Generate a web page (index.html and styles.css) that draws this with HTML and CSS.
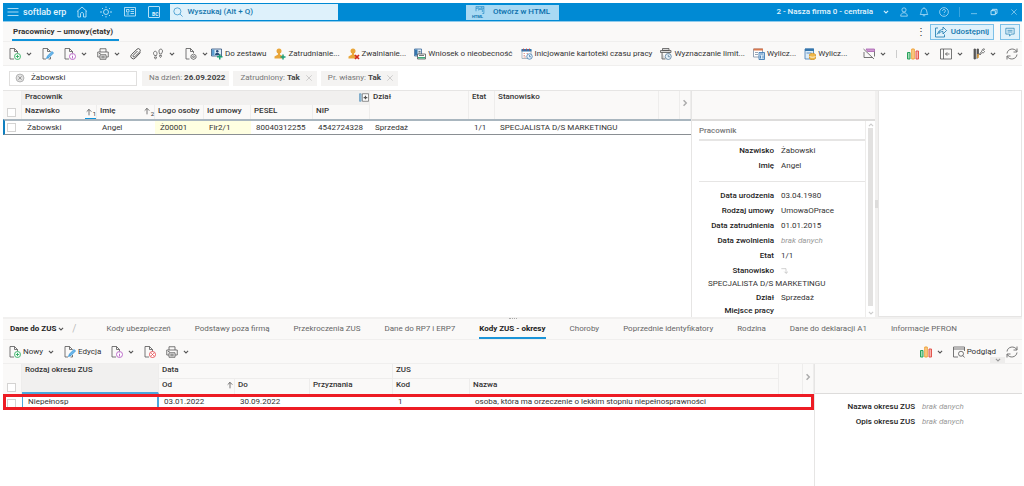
FILE: index.html
```html
<!DOCTYPE html>
<html lang="pl">
<head>
    <meta charset="UTF-8">
    <meta name="viewport" content="width=device-width, initial-scale=1.0">
    <title>softlab erp - Pracownicy – umowy(etaty)</title>
    <link rel="stylesheet" href="styles.css">
</head>
<body>
    <!-- Icon sprite -->
    <svg class="sprite" aria-hidden="true">
        <symbol id="i-chev" viewBox="0 0 10 10"><path d="M1.500 3.200 5 6.600l3.500-3.400" stroke-width="1.800"/></symbol>
        <symbol id="i-page" viewBox="0 0 24 24"><path d="M10 22H2V1h9l6 6v4M11 1v6h6"/></symbol>
        <symbol id="i-new" viewBox="0 0 24 24"><use href="#i-page"/><g stroke="#2fae60" stroke-width="1.800"><circle cx="17" cy="17" r="6" fill="#fff"/><path d="M17 13.500v7M13.500 17h7"/></g></symbol>
        <symbol id="i-info" viewBox="0 0 24 24"><use href="#i-page"/><g stroke="#b65fc4" stroke-width="1.800"><circle cx="17" cy="17" r="6" fill="#fff"/><path d="M17 16v5M17 13v1.500"/></g></symbol>
        <symbol id="i-del" viewBox="0 0 24 24"><use href="#i-page"/><g stroke="#e5484d" stroke-width="1.800"><circle cx="17" cy="17" r="6" fill="#fff"/><path d="m14.500 14.500 5 5m0-5-5 5"/></g></symbol>
        <symbol id="i-gear" viewBox="0 0 24 24"><path d="M9 22H2V1h9l6 6v3M11 1v6h6"/><path d="m17 12 5 3v5l-5 3-5-3v-5z"/><circle cx="17" cy="17.500" r="1.800"/></symbol>
        <symbol id="i-edit" viewBox="0 0 24 24"><path d="M8 22H2V1h9l6 6M11 1v6h6M17 18v4h-4"/><path d="m9 21 2-5L20 7l3 3-9 9z" fill="#6db8ea" stroke="#2b8fd6" stroke-width="1.500"/></symbol>
        <symbol id="i-print" viewBox="0 0 24 24"><path d="M6 8V1.500h12V8M6 18H1.500V8h21v10H18M6 13.500h12v9H6zM8.500 16.500h7M8.500 19.500h7M4 11h3"/></symbol>
        <symbol id="i-clip" viewBox="0 0 24 24"><path d="M21 9 10.500 20a5 5 0 0 1-7.500-7L14 2.500a3.500 3.500 0 0 1 5.500 5L9.500 17.500a1.800 1.800 0 0 1-3-3L15 6" stroke-width="2"/></symbol>
        <symbol id="i-feet" viewBox="0 0 24 24"><path d="M3 11c0-6 7-6 7 0 0 2-1 3-1 4H5c0-1-2-2-2-4zM5 18h4c0 5-4 5-4 0zM14 6c0-5 7-5 7 0 0 3-2 4-2 6h-4c0-2-1-3-1-6zM15 15h4c0 5-4 5-4 0z"/></symbol>
        <symbol id="i-set" viewBox="0 0 24 24"><path d="M1 2h20v14H1z" fill="#dcecf8" stroke="#2d4f78"/><path d="M2 3h5v12H2z" fill="#5c9fd2" stroke="none"/><circle cx="12.500" cy="6.500" r="2.500" fill="#274b78" stroke="none"/><path d="M8 14c0-6 9-6 9 0z" fill="#274b78" stroke="none"/><path d="M17.500 12v11M12 17.500h11" stroke="#1e9e75" stroke-width="3"/></symbol>
        <symbol id="i-user" viewBox="0 0 24 24"><circle cx="10" cy="6" r="5" fill="#e9a63a" stroke="none"/><path d="M8 10h4v3l5 3v5H1v-4l7-4z" fill="#e9a63a" stroke="none"/></symbol>
        <symbol id="i-hire" viewBox="0 0 24 24"><use href="#i-user"/><path d="M18 13v10M13 18h10" stroke="#1e9e75" stroke-width="3"/></symbol>
        <symbol id="i-fire" viewBox="0 0 24 24"><use href="#i-user"/><path d="m14 14 8 8m0-8-8 8" stroke="#d02b1f" stroke-width="3.500"/></symbol>
        <symbol id="i-absence" viewBox="0 0 24 24"><path d="M1 2h14v14H1z" fill="#dcecf8" stroke="#3c6a9a"/><path d="M2 3h5v12H2z" fill="#3576ad" stroke="none"/><path d="M9 7h4M9 10h4"/><path d="M7 12h16v10H7z" fill="#fff"/><path d="M8 18h14v3H8z" fill="#3fae7b" stroke="none"/><path d="M10 15h10"/></symbol>
        <symbol id="i-time" viewBox="0 0 24 24"><path d="M2 4h18v17H2z" fill="#fff" stroke="#9aa7b3"/><path d="M1 2h20v5H1z" fill="#3576ad" stroke="none"/><path d="M5 1v4M11 1v4M17 1v4" stroke="#d0453a"/><path d="M5 11h3M11 11h3M5 15h3M5 18h5" stroke="#d98a80"/><circle cx="17" cy="17" r="5.500" fill="#e6f2fb" stroke="#4a7fae"/><path d="M17 14v3.500h3" stroke="#4a7fae"/></symbol>
        <symbol id="i-limit" viewBox="0 0 24 24"><path d="M5 1h13v4H5zM1 5h21v4H1zM4 9v13h7M18 9v2" fill="#d8d8d8"/><circle cx="16.500" cy="17" r="6" fill="#e6f2fb" stroke="#557a99"/><path d="M16.500 13.500v4h3.500" stroke="#557a99"/></symbol>
        <symbol id="i-calc" viewBox="0 0 24 24"><path d="M1 2h18v16H1z" fill="#fff" stroke="#7b8da3"/><path d="M1 1h19v4H1z" fill="#d9784e" stroke="none"/><path d="M4 9h6M4 13h6" stroke="#7b8da3"/><path d="M12 9h11v14H12z" fill="#dcecf8" stroke="#2c6fae"/><path d="M14 12h7M15 15v6M20 15v6" stroke="#2c6fae"/></symbol>
        <symbol id="i-coins" viewBox="0 0 24 24"><path d="M2 2h17v20H2z" fill="#dcecf8" stroke="#4378ad"/><path d="M2 1h18v5H2z" fill="#3576ad" stroke="none"/><path d="M5 10h10" stroke="#4378ad"/><path d="M11 13c2-3 10-3 12 0v8c-2 3-10 3-12 0z" fill="#f0b849" stroke="#d6942a"/><path d="M11 17c3 2 9 2 12 0" stroke="#fff"/></symbol>
        <symbol id="i-rule" viewBox="0 0 24 24"><path d="M2 8v11h17"/><path d="M6 2h17v5H9z" fill="#cf9ad2" stroke="#a75fb0"/><path d="m1 2 21 20M23 7v10"/></symbol>
        <symbol id="i-chart" viewBox="0 0 24 24"><path d="M1 9h5v13H1z" fill="#a5dcb8" stroke="#27a35c" stroke-width="2"/><path d="M9.500 2h5v20h-5z" fill="#fbd194" stroke="#f0a036" stroke-width="2"/><path d="M18 6h5v16h-5z" fill="#f8b3ae" stroke="#e2554d" stroke-width="2"/></symbol>
        <symbol id="i-pane" viewBox="0 0 24 24"><path d="M1 2h22v20H1zM7 2v20M19 12h-8m3.500-3.500L11 12l3.500 3.500"/></symbol>
        <symbol id="i-tools" viewBox="0 0 24 24"><path d="M2 2h3v20H2zM8 2h3v11l-3 8z" fill="#555"/><path d="m13 12 5-6c0-4 3-5 5-4l-2 3 2 2c-1 3-3 3-5 2l-4 5z" fill="#fff"/><path d="M10 12v8" stroke="#e6a23a" stroke-width="3"/></symbol>
        <symbol id="i-refresh" viewBox="0 0 24 24"><path d="M2 11C3 1 17-1 21.500 7M22 1v7h-7M22 13c-1 10-15 12-19.500 4M2 23v-7h7"/></symbol>
        <symbol id="i-preview" viewBox="0 0 24 24"><path d="M10 22H1V2h22v8M1 6h22"/><circle cx="16" cy="15.500" r="5"/><path d="m19.500 19 3.500 4"/></symbol>
        <symbol id="i-menu" viewBox="0 0 24 24"><path d="M1 5h22M1 12h22M1 19h22"/></symbol>
        <symbol id="i-home" viewBox="0 0 24 24"><path d="M2 11 12 2l10 9M4 10v12h5v-6c0-4 6-4 6 0v6h5V10"/></symbol>
        <symbol id="i-sun" viewBox="0 0 24 24"><circle cx="12" cy="12" r="5"/><path d="M12 1v3M12 20v3M0 12h4M20 12h4M4 4l2 2M18 18l2 2M20 4l-2 2M4 20l2-2"/></symbol>
        <symbol id="i-card" viewBox="0 0 24 24"><path d="M1 3h22v17H1zM5 7h5v5H5zM5 16h5M13 7h7M13 11h7M13 15h7"/></symbol>
        <symbol id="i-search" viewBox="0 0 24 24"><circle cx="10.500" cy="10.500" r="8.500"/><path d="m17 17 6 6"/></symbol>
        <symbol id="i-html" viewBox="0 0 28 24"><path d="M6 14V1h21v19h-4M6 6h21M10 3.500h3M13 12V9h10v7M19 3.500h4"/></symbol>
        <symbol id="i-person" viewBox="0 0 24 24"><circle cx="12" cy="7" r="5"/><path d="M4 22c0-11 16-11 16 0z"/></symbol>
        <symbol id="i-bell" viewBox="0 0 24 24"><path d="M3 18c3-3 1-15 9-15s6 12 9 15zM9 21h6M12 1v2"/></symbol>
        <symbol id="i-help" viewBox="0 0 24 24"><circle cx="12" cy="12" r="10.500"/><path d="M8.500 9.500c0-5 7-4.500 7 0 0 2.500-3.500 2.500-3.500 5M12 17v1.500"/></symbol>
        <symbol id="i-min" viewBox="0 0 24 24"><path d="M3 17h18"/></symbol>
        <symbol id="i-restore" viewBox="0 0 24 24"><path d="M3 8h13v12H3zM7 8V4h14v12h-5" stroke-width="2.500"/></symbol>
        <symbol id="i-close" viewBox="0 0 24 24"><path d="m4 4 16 16M20 4 4 20"/></symbol>
        <symbol id="i-share" viewBox="0 0 24 24"><path d="M6 4H1v18h18v-5M4 17 9 9"/><path d="M8 15c0-6 3-8 8-8V2l7 7-7 7v-5c-4 0-6 1-8 4z"/></symbol>
        <symbol id="i-chat" viewBox="0 0 24 24"><path d="M2 3h20v14h-7l-4 5v-5H2zM6 8h12M6 12h12"/></symbol>
        <symbol id="i-up" viewBox="0 0 12 12"><path d="M6 11V2M2.500 5.500 6 2l3.500 3.500"/></symbol>
        <symbol id="i-clear" viewBox="0 0 24 24"><circle cx="12" cy="12" r="9.500" fill="#e2e2e2" stroke="#999"/><path d="m8 8 8 8m0-8-8 8" stroke="#777"/></symbol>
        <symbol id="i-fold" viewBox="0 0 24 20"><path d="M1 1h4v18H1z" fill="#9cc6e3" stroke="#5b93b8"/><path d="M8 1h15v18H8z" fill="#fff"/><path d="M11 10h9M15.500 6v8" stroke-width="3"/></symbol>
        <symbol id="i-jump" viewBox="0 0 24 24"><path d="M1 5h14v14M10 14l5 5 6-5"/></symbol>
    </svg>

    <div class="app">
        <header class="topbar">
            <div class="topbar-left">
                <button class="icon-btn" aria-label="Menu"><svg class="icon"><use href="#i-menu"/></svg></button>
                <span class="brand">softlab erp</span>
                <nav class="shortcuts">
                    <button class="icon-btn" aria-label="Start"><svg class="icon"><use href="#i-home"/></svg></button>
                    <button class="icon-btn" aria-label="Motyw"><svg class="icon"><use href="#i-sun"/></svg></button>
                    <button class="icon-btn" aria-label="Karta"><svg class="icon"><use href="#i-card"/></svg></button>
                    <button class="bc">BC</button>
                </nav>
                <label class="search">
                    <svg class="icon"><use href="#i-search"/></svg>
                    <input type="text" placeholder="Wyszukaj (Alt + Q)" aria-label="Wyszukaj">
                </label>
            </div>
            <button class="open-html">
                <span class="html-icon"><svg class="icon"><use href="#i-html"/></svg><small>HTML</small></span>
                Otwórz w HTML
            </button>
            <div class="topbar-right">
                <button class="icon-btn company">2 - Nasza firma 0 - centrala <svg class="chev"><use href="#i-chev"/></svg></button>
                <div class="account">
                    <button class="icon-btn" aria-label="Konto"><svg class="icon small"><use href="#i-person"/></svg></button>
                    <button class="icon-btn" aria-label="Powiadomienia"><svg class="icon small"><use href="#i-bell"/></svg></button>
                    <button class="icon-btn" aria-label="Pomoc"><svg class="icon small"><use href="#i-help"/></svg></button>
                </div>
                <div class="window-buttons">
                    <button class="icon-btn" aria-label="Minimalizuj"><svg class="icon tiny"><use href="#i-min"/></svg></button>
                    <button class="icon-btn" aria-label="Przywróć"><svg class="icon tiny"><use href="#i-restore"/></svg></button>
                    <button class="icon-btn" aria-label="Zamknij"><svg class="icon tiny"><use href="#i-close"/></svg></button>
                </div>
            </div>
        </header>

        <div class="page-tabs">
            <a href="#" class="page-tab">Pracownicy – umowy(etaty)</a>
            <div class="page-actions">
                <button class="icon-btn" aria-label="Więcej">⋮</button>
                <button class="share"><svg class="icon"><use href="#i-share"/></svg>Udostępnij</button>
                <button class="share chat" aria-label="Komentarze"><svg class="icon small"><use href="#i-chat"/></svg></button>
            </div>
        </div>

        <div class="toolbar">
            <div class="tools">
                <button class="tool" aria-label="Nowy"><svg class="icon"><use href="#i-new"/></svg><svg class="chev"><use href="#i-chev"/></svg></button>
                <button class="tool" aria-label="Edycja"><svg class="icon"><use href="#i-edit"/></svg></button>
                <button class="tool" aria-label="Informacje"><svg class="icon"><use href="#i-info"/></svg><svg class="chev"><use href="#i-chev"/></svg></button>
                <button class="tool" aria-label="Drukuj"><svg class="icon"><use href="#i-print"/></svg><svg class="chev"><use href="#i-chev"/></svg></button>
                <button class="tool" aria-label="Załączniki"><svg class="icon"><use href="#i-clip"/></svg></button>
                <button class="tool" aria-label="Ślad"><svg class="icon"><use href="#i-feet"/></svg><svg class="chev"><use href="#i-chev"/></svg></button>
                <button class="tool" aria-label="Operacje"><svg class="icon"><use href="#i-gear"/></svg><svg class="chev"><use href="#i-chev"/></svg></button>
            </div>
            <div class="tools named">
                <button class="tool"><svg class="icon"><use href="#i-set"/></svg>Do zestawu</button>
                <button class="tool"><svg class="icon"><use href="#i-hire"/></svg>Zatrudnianie...</button>
                <button class="tool"><svg class="icon"><use href="#i-fire"/></svg>Zwalnianie...</button>
                <button class="tool"><svg class="icon"><use href="#i-absence"/></svg>Wniosek o nieobecność</button>
                <button class="tool"><svg class="icon"><use href="#i-time"/></svg>Inicjowanie kartoteki czasu pracy</button>
                <button class="tool"><svg class="icon"><use href="#i-limit"/></svg>Wyznaczanie limit...</button>
                <button class="tool"><svg class="icon"><use href="#i-calc"/></svg>Wylicz...</button>
                <button class="tool"><svg class="icon"><use href="#i-coins"/></svg>Wylicz...</button>
            </div>
            <div class="tools right">
                <button class="tool" aria-label="Reguły"><svg class="icon"><use href="#i-rule"/></svg><svg class="chev"><use href="#i-chev"/></svg></button>
                <span class="divider"></span>
                <button class="tool" aria-label="Wykres"><svg class="icon"><use href="#i-chart"/></svg><svg class="chev"><use href="#i-chev"/></svg></button>
                <button class="tool" aria-label="Panel"><svg class="icon"><use href="#i-pane"/></svg><svg class="chev"><use href="#i-chev"/></svg></button>
                <button class="tool" aria-label="Narzędzia"><svg class="icon"><use href="#i-tools"/></svg><svg class="chev"><use href="#i-chev"/></svg></button>
                <button class="tool" aria-label="Odśwież"><svg class="icon"><use href="#i-refresh"/></svg></button>
            </div>
        </div>

        <div class="filters">
            <label class="filter-input">
                <svg class="icon small"><use href="#i-clear"/></svg>
                <input type="text" value="Żabowski" aria-label="Filtr">
            </label>
            <button class="chip">Na dzień: <b>26.09.2022</b></button>
            <button class="chip">Zatrudniony: <b>Tak</b><svg class="icon tiny"><use href="#i-close"/></svg></button>
            <button class="chip">Pr. własny: <b>Tak</b><svg class="icon tiny"><use href="#i-close"/></svg></button>
        </div>

        <main class="upper">
            <section class="grid-pane">
                <table class="grid employees">
                    <colgroup>
                        <col class="w-check"><col class="w-surname"><col class="w-name"><col class="w-logo"><col class="w-id"><col class="w-pesel"><col class="w-nip"><col class="w-dept"><col class="w-etat"><col class="w-job"><col><col class="w-more">
                    </colgroup>
                    <thead>
                        <tr>
                            <th rowspan="2" class="check"><input type="checkbox" aria-label="Zaznacz wszystkie"></th>
                            <th colspan="6" class="group"><div class="th">Pracownik<svg class="icon fold"><use href="#i-fold"/></svg></div></th>
                            <th rowspan="2">Dział</th>
                            <th rowspan="2">Etat</th>
                            <th rowspan="2">Stanowisko</th>
                            <th rowspan="2"></th>
                            <th rowspan="2" class="more"><svg class="chev"><use href="#i-chev"/></svg></th>
                        </tr>
                        <tr>
                            <th><div class="th">Nazwisko<span class="sort active"><svg class="icon arrow"><use href="#i-up"/></svg><sub>1</sub></span></div></th>
                            <th><div class="th">Imię<span class="sort"><svg class="icon arrow"><use href="#i-up"/></svg><sub>2</sub></span></div></th>
                            <th>Logo osoby</th>
                            <th>Id umowy</th>
                            <th>PESEL</th>
                            <th>NIP</th>
                        </tr>
                    </thead>
                    <tbody>
                        <tr>
                            <td class="check"><input type="checkbox" aria-label="Zaznacz wiersz"></td>
                            <td>Żabowski</td>
                            <td>Angel</td>
                            <td class="key">Ż00001</td>
                            <td class="key">Fir2/1</td>
                            <td>80040312255</td>
                            <td>4542724328</td>
                            <td>Sprzedaż</td>
                            <td>1/1</td>
                            <td>SPECJALISTA D/S MARKETINGU</td>
                            <td></td>
                            <td></td>
                        </tr>
                    </tbody>
                </table>
            </section>

            <aside class="details">
                <div class="details-head"></div>
                <div class="details-body">
                    <div class="details-content">
                        <h2>Pracownik</h2>
                        <dl>
                            <dt>Nazwisko</dt><dd>Żabowski</dd>
                            <dt>Imię</dt><dd>Angel</dd>
                        </dl>
                        <dl class="second">
                            <dt>Data urodzenia</dt><dd>03.04.1980</dd>
                            <dt>Rodzaj umowy</dt><dd>UmowaOPrace</dd>
                            <dt>Data zatrudnienia</dt><dd>01.01.2015</dd>
                            <dt>Data zwolnienia</dt><dd class="empty">brak danych</dd>
                            <dt>Etat</dt><dd>1/1</dd>
                            <dt>Stanowisko</dt><dd><svg class="icon jump"><use href="#i-jump"/></svg></dd>
                            <dd class="wide">SPECJALISTA D/S MARKETINGU</dd>
                            <dt>Dział</dt><dd>Sprzedaż</dd>
                            <dt class="last">Miejsce pracy</dt><dd class="last"></dd>
                        </dl>
                    </div>
                    <div class="scrollbar">
                        <svg class="chev up"><use href="#i-chev"/></svg>
                        <div class="thumb"></div>
                        <svg class="chev"><use href="#i-chev"/></svg>
                    </div>
                </div>
            </aside>
            <div class="splitter"><span></span></div>
            <aside class="blank-pane"></aside>
        </main>

        <div class="h-splitter"><span></span></div>

        <nav class="sub-tabs">
            <button class="icon-btn sub-title">Dane do ZUS<svg class="chev"><use href="#i-chev"/></svg><span class="slash">/</span></button>
            <a href="#">Kody ubezpieczeń</a>
            <a href="#">Podstawy poza firmą</a>
            <a href="#">Przekroczenia ZUS</a>
            <a href="#">Dane do RP7 i ERP7</a>
            <a href="#" class="active">Kody ZUS - okresy</a>
            <a href="#">Choroby</a>
            <a href="#">Poprzednie identyfikatory</a>
            <a href="#">Rodzina</a>
            <a href="#">Dane do deklaracji A1</a>
            <a href="#">Informacje PFRON</a>
        </nav>

        <div class="toolbar sub-toolbar">
            <div class="tools">
                <button class="tool"><svg class="icon"><use href="#i-new"/></svg>Nowy<svg class="chev"><use href="#i-chev"/></svg></button>
                <button class="tool"><svg class="icon"><use href="#i-edit"/></svg>Edycja</button>
                <button class="tool" aria-label="Informacje"><svg class="icon"><use href="#i-info"/></svg><svg class="chev"><use href="#i-chev"/></svg></button>
                <button class="tool" aria-label="Usuń"><svg class="icon"><use href="#i-del"/></svg></button>
                <button class="tool" aria-label="Drukuj"><svg class="icon"><use href="#i-print"/></svg><svg class="chev"><use href="#i-chev"/></svg></button>
            </div>
            <div class="tools right">
                <button class="tool" aria-label="Wykres"><svg class="icon"><use href="#i-chart"/></svg><svg class="chev"><use href="#i-chev"/></svg></button>
                <button class="tool"><svg class="icon"><use href="#i-preview"/></svg>Podgląd</button>
                <button class="tool" aria-label="Odśwież"><svg class="icon"><use href="#i-refresh"/></svg></button>
            </div>
            <button class="collapse" aria-label="Zwiń"><svg class="chev"><use href="#i-chev"/></svg></button>
        </div>

        <div class="lower">
            <section class="grid-pane">
                <table class="grid periods">
                    <colgroup>
                        <col class="w-check"><col class="w-kind"><col class="w-from"><col class="w-to"><col class="w-grant"><col class="w-code"><col><col class="w-fill"><col class="w-more">
                    </colgroup>
                    <thead>
                        <tr>
                            <th rowspan="2" class="check"><input type="checkbox" aria-label="Zaznacz wszystkie"></th>
                            <th rowspan="2" class="sorted">Rodzaj okresu ZUS</th>
                            <th colspan="3" class="line">Data</th>
                            <th colspan="2" class="line">ZUS</th>
                            <th rowspan="2"></th>
                            <th rowspan="2" class="more"><svg class="chev"><use href="#i-chev"/></svg></th>
                        </tr>
                        <tr>
                            <th><div class="th">Od<span class="sort"><svg class="icon arrow"><use href="#i-up"/></svg></span></div></th>
                            <th>Do</th>
                            <th>Przyznania</th>
                            <th>Kod</th>
                            <th>Nazwa</th>
                        </tr>
                    </thead>
                    <tbody>
                        <tr>
                            <td class="check"><input type="checkbox" aria-label="Zaznacz wiersz"></td>
                            <td class="current">Niepełnosp</td>
                            <td>03.01.2022</td>
                            <td>30.09.2022</td>
                            <td></td>
                            <td>1</td>
                            <td>osoba, która ma orzeczenie o lekkim stopniu niepełnosprawności</td>
                            <td></td>
                            <td></td>
                        </tr>
                    </tbody>
                </table>
            </section>
            <aside class="period-details">
                <div class="details-head"></div>
                <dl>
                    <dt>Nazwa okresu ZUS</dt><dd class="empty">brak danych</dd>
                    <dt>Opis okresu ZUS</dt><dd class="empty">brak danych</dd>
                </dl>
            </aside>
        </div>
    </div>
</body>
</html>
```

FILE: styles.css
```css
* {
    box-sizing: border-box;
}
body {
    margin: 0;
    font-family: Roboto, "Liberation Sans", sans-serif;
    font-size: 8px;
    line-height: 12px;
    color: #333;
    background-color: #fff;
}
button, input {
    font: inherit;
    color: inherit;
}
button {
    display: flex;
    align-items: center;
    padding: 0;
    border: none;
    background: none;
    white-space: nowrap;
    cursor: pointer;
}
a {
    color: inherit;
    text-decoration: none;
}
.app {
    display: flex;
    flex-direction: column;
    min-height: 100vh;
    padding: 3px 2px 0 3px;
}

/* Icons */
.sprite {
    position: absolute;
    width: 0;
    height: 0;
}
.icon, .chev {
    flex: none;
    width: 12px;
    height: 12px;
    fill: none;
    stroke: #555;
    stroke-width: 1.6;
}
.icon.small {
    width: 10px;
    height: 10px;
}
.icon.tiny {
    width: 8px;
    height: 8px;
}
.chev {
    width: 6px;
    height: 6px;
}

/* Top bar */
.topbar {
    display: grid;
    grid-template-columns: 1fr auto 1fr;
    align-items: center;
    height: 19px;
    background-color: #008ad4;
    border-bottom: 1px solid #8fcbec;
    color: #e3f4fd;
}
.topbar .icon-btn .icon, .topbar .chev {
    stroke: #d3effd;
}
.topbar-left, .topbar-right, .shortcuts, .account, .window-buttons {
    display: flex;
    align-items: center;
}
.topbar-left {
    padding-left: 4px;
}
.brand {
    margin: 0 10px 0 4px;
    font-size: 9px;
    font-weight: 500;
}
.shortcuts {
    gap: 12px;
}
.bc {
    justify-content: flex-end;
    align-items: flex-end;
    width: 12px;
    height: 12px;
    padding-right: 1px;
    border: 1px solid #b5e0f7;
    border-radius: 1px;
    font-size: 5px;
    font-weight: bold;
    line-height: 6px;
}
.search {
    display: flex;
    align-items: center;
    gap: 4px;
    flex: 0 1 168px;
    height: 16px;
    margin-left: 10px;
    padding: 0 3px;
    background-color: #def1fb;
}
.search .icon {
    width: 10px;
    height: 10px;
    stroke: #1b86c4;
}
.search input, .filter-input input {
    flex: 1;
    min-width: 0;
    padding: 0;
    border: none;
    background: none;
    outline: none;
}
.search input::placeholder {
    color: #1577ad;
    font-weight: 500;
    opacity: 1;
}
.open-html {
    gap: 7px;
    height: 15px;
    padding: 0 9px 0 6px;
    background-color: #a9d9f3;
    color: #0a70ad;
    font-weight: 500;
}
.html-icon {
    display: flex;
    flex-direction: column;
    align-items: flex-start;
}
.html-icon .icon {
    width: 14px;
    height: 9px;
    stroke: #0a7dbf;
}
.html-icon small {
    font-size: 4px;
    font-weight: bold;
    line-height: 4px;
}
.topbar-right {
    justify-content: flex-end;
}
.company {
    gap: 10px;
    margin-right: 10px;
    font-weight: 500;
}
.account {
    gap: 10px;
    padding-right: 10px;
    border-right: 1px solid #3aa5df;
}
.window-buttons {
    gap: 12px;
    padding: 0 4px 0 10px;
}

/* Page tab row */
.page-tabs {
    display: flex;
    justify-content: space-between;
    align-items: stretch;
    height: 20px;
    padding: 0 2px 0 9px;
    background-color: #faf9f8;
    border-bottom: 1px solid #f0efee;
}
.page-tab {
    padding: 4px 6px 0 1px;
    border-bottom: 2px solid #0f93da;
    font-weight: bold;
}
.page-actions {
    display: flex;
    align-items: center;
    gap: 6px;
}
.page-actions .icon-btn {
    width: 8px;
    font-size: 10px;
}
.share {
    gap: 4px;
    height: 16px;
    padding: 0 4px;
    border: 1px solid #7cc0e8;
    background-color: #dff1fb;
    color: #1577ad;
    font-weight: 500;
}
.share .icon {
    stroke: #1577ad;
}

/* Toolbars */
.toolbar {
    display: flex;
    align-items: center;
    height: 24px;
    padding: 0 4px 0 6px;
    background-color: #faf9f8;
    border-bottom: 1px solid #f0efee;
}
.tools {
    display: flex;
    align-items: center;
    gap: 10px;
}
.tools.named {
    gap: 8px;
    margin-left: 3px;
}
.tools.right {
    margin-left: auto;
}
.tool {
    gap: 2px;
}
.tool .chev {
    margin-left: 3px;
}
.divider {
    width: 1px;
    height: 8px;
    background-color: #ccc;
}

/* Filters */
.filters {
    display: flex;
    align-items: center;
    gap: 4px;
    height: 24px;
    padding: 0 6px;
}
.filter-input {
    display: flex;
    align-items: center;
    gap: 6px;
    width: 128px;
    height: 15px;
    margin-right: 1px;
    padding: 0 5px;
    border: 1px solid #e0dfde;
}
.chip {
    gap: 2px;
    height: 15px;
    padding: 0 4px 0 7px;
    background-color: #f4f3f2;
    color: #777;
}
.chip b {
    color: #444;
}
.chip .icon {
    margin-left: 3px;
    stroke: #aaa;
}

/* Data grids */
.upper {
    display: flex;
    border-top: 1px solid #e6e5e4;
}
.grid-pane {
    flex: 1;
    min-width: 0;
}
.grid {
    width: 100%;
    table-layout: fixed;
    border-collapse: separate;
    border-spacing: 0;
    white-space: nowrap;
}
.grid th {
    height: 14px;
    padding: 0 0 0 3px;
    background-color: #faf9f8;
    border-right: 1px solid #eeedec;
    font-weight: 500;
    text-align: left;
    vertical-align: top;
}
.grid th.check, .grid td.check {
    padding: 0 0 0 4px;
    vertical-align: bottom;
}
.grid th.group {
    background-color: #f1f0ef;
}
.grid th.more {
    padding: 0;
    text-align: center;
    vertical-align: middle;
}
.more .chev {
    width: 8px;
    height: 8px;
    stroke: #aaa;
    transform: rotate(-90deg);
}
.th {
    display: flex;
    justify-content: space-between;
}
.fold {
    width: 10px;
    height: 9px;
    margin-top: 2px;
}
.grid td {
    height: 14px;
    padding: 0 0 0 5px;
}
.check input {
    display: block;
    appearance: none;
    width: 9px;
    height: 9px;
    margin: 0 0 2px;
    border: 1px solid #d4d3d2;
    background-color: #fff;
}
.sort {
    display: flex;
    align-items: center;
}
.sort.active {
    height: 14px;
    border-bottom: 1px solid #0f93da;
}
.sort sub {
    margin-top: 5px;
    font-size: 6px;
    font-weight: normal;
    line-height: 6px;
}
.arrow {
    width: 8px;
    height: 8px;
    stroke-width: 1.2;
}
.employees td {
    height: 16px;
    border-top: 2px solid #a9b6bf;
    border-bottom: 1px solid #8a8f93;
}
.employees td.check {
    padding-left: 2px;
    border-left: 2px solid #0f7fc0;
}
.key {
    background-color: #ffffe1;
}
.w-check { width: 19px; }
.w-surname { width: 75px; }
.w-name { width: 58px; }
.w-logo { width: 49px; }
.w-id { width: 47px; }
.w-pesel { width: 62px; }
.w-nip { width: 57px; }
.w-dept { width: 99px; }
.w-etat { width: 26px; }
.w-job { width: 164px; }
.w-more { width: 11px; }
.w-kind { width: 137px; }
.w-from { width: 76px; }
.w-to { width: 75px; }
.w-grant { width: 83px; }
.w-code { width: 77px; }
.w-fill { width: 24px; }

/* Employee details */
.details {
    display: flex;
    flex-direction: column;
    flex: 0 0 184px;
    border-left: 1px solid #e6e5e4;
}
.details-head {
    height: 30px;
    background-color: #faf9f8;
    border-bottom: 2px solid #dddcdb;
}
.details-body {
    display: flex;
    flex: 1;
}
.details-content {
    flex: 1;
    padding-left: 7px;
}
h2 {
    margin: 0;
    padding: 4px 0 2px;
    border-bottom: 2px solid #e6e5e4;
    color: #777;
    font-size: 8px;
    font-weight: 500;
}
dl {
    display: grid;
    grid-template-columns: 75px 1fr;
    column-gap: 7px;
    margin: 0;
    padding: 2px 0 8px;
    line-height: 15px;
}
dl.second {
    padding: 6px 0 0;
    border-top: 1px solid #e6e5e4;
}
dt {
    font-weight: 500;
    text-align: right;
    color: #222;
}
dd {
    margin: 0;
}
dd.empty {
    color: #999;
    font-style: italic;
}
dd.wide {
    grid-column: 1 / 3;
    padding-left: 9px;
    line-height: 12px;
}
.last {
    line-height: 12px;
}
.jump {
    display: block;
    width: 8px;
    height: 8px;
    margin-top: 4px;
    stroke: #aaa;
}
.scrollbar {
    display: flex;
    flex-direction: column;
    align-items: center;
    width: 10px;
    padding: 1px 0;
    border-left: 1px solid #eeedec;
}
.scrollbar .chev {
    stroke: #ccc;
}
.scrollbar .up {
    transform: rotate(180deg);
}
.thumb {
    flex: 1;
    width: 5px;
    margin-bottom: 4px;
    background-color: #e2e1e0;
}
.splitter {
    display: flex;
    align-items: center;
    width: 3px;
    background-color: #f1f0ef;
}
.splitter span {
    width: 3px;
    height: 8px;
    background-color: #dddcdb;
}
.blank-pane {
    flex: 0 0 144px;
    border: 1px solid #e6e5e4;
    border-top: none;
}

/* Lower part */
.h-splitter {
    display: flex;
    justify-content: center;
    height: 2px;
    background-color: #f1f0ef;
}
.h-splitter span {
    width: 8px;
    border-bottom: 1px dotted #aaa;
}
.sub-tabs {
    display: flex;
    align-items: stretch;
    gap: 24px;
    height: 21px;
    padding-left: 7px;
    background-color: #faf9f8;
    border-bottom: 1px solid #f0efee;
    color: #666;
    white-space: nowrap;
}
.sub-tabs a {
    padding-top: 4px;
    border-bottom: 2px solid transparent;
}
.sub-tabs a.active {
    border-color: #1a94d8;
    color: #222;
    font-weight: bold;
}
.sub-title {
    gap: 2px;
    margin-right: 6px;
    color: #222;
    font-weight: bold;
}
.slash {
    margin-left: 6px;
    color: #bbb;
    font-size: 10px;
    font-weight: normal;
}
.sub-toolbar {
    position: relative;
}
.collapse {
    position: absolute;
    right: 17px;
    bottom: 0;
    justify-content: center;
    width: 15px;
    height: 6px;
    background-color: #eeedec;
}
.collapse .chev {
    stroke: #999;
}
.lower {
    display: flex;
    flex: 1;
}
.periods th {
    height: 15px;
}
.periods th.line {
    border-bottom: 1px solid #eeedec;
}
.periods th.sorted {
    background-color: #f1f0ef;
    border-bottom: 2px solid #4aa8de;
}
.periods td {
    height: 16px;
}
.periods tbody tr {
    outline: 3px solid #ed1c24;
    outline-offset: -3px;
}
.periods td.current {
    border-left: 1px solid #4aa8de;
    border-right: 2px solid #4aa8de;
}
.period-details {
    flex: 0 0 208px;
    border-left: 1px solid #e6e5e4;
}
.period-details .details-head {
    border-bottom-width: 1px;
}
.period-details dl {
    grid-template-columns: 100px 1fr;
    padding-top: 5px;
}
```
